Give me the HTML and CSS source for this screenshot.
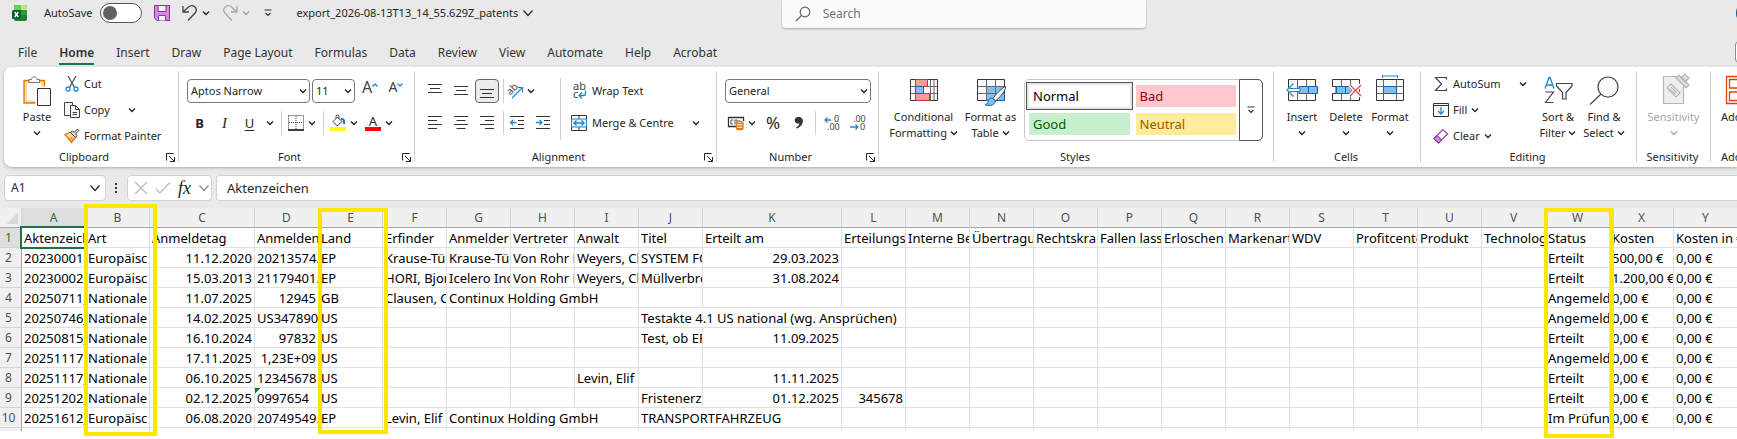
FILE: index.html
```html
<!DOCTYPE html>
<html lang="en">
<head>
  <meta charset="UTF-8" />
  <meta name="viewport" content="width=device-width, initial-scale=1.0"/>
  <title>export_2026-08-13T13_14_55.629Z_patents</title>
  <link rel="stylesheet" href="styles.css">
</head>
<body>

<svg class="defs" aria-hidden="true">
  <symbol id="chev" viewBox="0 0 8 8"><path d="M1 2.5 4 5.5 7 2.5" fill="none" stroke="currentColor" stroke-width="1.4"/></symbol>
  <symbol id="chev-lg" viewBox="0 0 12 12"><path d="M1.5 3.5 6 8.5 10.5 3.5" fill="none" stroke="currentColor" stroke-width="1.2"/></symbol>
  <symbol id="launch" viewBox="0 0 9 9"><path d="M.5 7.500V.5H7.500M3 3 8 8M8.500 4V8.500H4" fill="none" stroke="currentColor"/></symbol>
</svg>

<header class="titlebar">
  <div class="title-left">
    <svg class="logo" width="16" height="18" viewBox="0 0 16 18">
      <rect x="2" y="1" width="13" height="16" rx="2" fill="#1a7f37"/>
      <path d="M2 6V3a2 2 0 0 1 2-2h5v5z" fill="#5fd35a"/>
      <path d="M9 1h4a2 2 0 0 1 2 2v3H9z" fill="#b5ec6a"/>
      <rect x="9" y="6" width="6" height="5" fill="#2c9b3c"/>
      <rect y="6" width="9" height="9" rx="1.500" fill="#0c5c30"/>
      <path d="M2.700 8 6.300 13M6.300 8 2.700 13" stroke="#fff" stroke-width="1.400"/>
    </svg>
    <label class="autosave">AutoSave <input type="checkbox"></label>
    <button class="save" aria-label="Save">
      <svg width="16" height="16" viewBox="0 0 16 16" fill="#d58be0" stroke="#8b2fa0"><path d="M.5.5H15.500V15.500H3L.5 13z"/><path d="M4 .5H12V6.500H4zM4.500 15.500V10.500H11.500V15.500" fill="#f8f0fa"/></svg>
    </button>
    <button class="undo" aria-label="Undo">
      <svg width="16" height="18" viewBox="0 0 16 18" fill="none" stroke="#444" stroke-width="1.300"><path d="M1 2V8H7M1 8 6.500 3C11-.5 16 4 13.500 8.500L6 16.500"/></svg>
      <svg class="chev"><use href="#chev"/></svg>
    </button>
    <button class="redo" aria-label="Redo">
      <svg width="16" height="18" viewBox="0 0 16 18" fill="none" stroke="#a8a8a8" stroke-width="1.300"><path d="M15 2V8H9M15 8 9.500 3C5-.5 0 4 2.500 8.500L10 16.500"/></svg>
      <svg class="chev"><use href="#chev"/></svg>
    </button>
    <button class="customize" aria-label="Customise toolbar">
      <svg width="8" height="8" viewBox="0 0 8 8" fill="none" stroke="#333" stroke-width="1.200"><path d="M.5 1H7.500M1.500 4 4 6.500 6.500 4"/></svg>
    </button>
    <button class="filename">export_2026-08-13T13_14_55.629Z_patents <svg class="chev-lg"><use href="#chev-lg"/></svg></button>
  </div>
  <label class="search">
    <svg width="16" height="16" viewBox="0 0 16 16" fill="none" stroke="#666" stroke-width="1.200"><circle cx="10" cy="6" r="4.800"/><path d="M6.500 9.500 1 15"/></svg>
    <input type="text" placeholder="Search" aria-label="Search">
  </label>
  <button class="avatar" aria-label="Account"></button>
</header>

<nav class="tabs">
  <a href="#">File</a>
  <a href="#" class="active">Home</a>
  <a href="#">Insert</a>
  <a href="#">Draw</a>
  <a href="#">Page Layout</a>
  <a href="#">Formulas</a>
  <a href="#">Data</a>
  <a href="#">Review</a>
  <a href="#">View</a>
  <a href="#">Automate</a>
  <a href="#">Help</a>
  <a href="#">Acrobat</a>
  <button class="comments" aria-label="Comments"></button>
</nav>

<section class="ribbon">
  <div class="group clipboard">
    <div class="group-body">
      <button class="big">
        <svg width="32" height="32" viewBox="0 0 32 32">
          <path d="M3 5.500H23.500V28H3z" fill="#fbd992" stroke="#dd7a14" stroke-width="1.300"/>
          <path d="M6 8H20.500V25.500H6z" fill="#fafafa"/>
          <path d="M8 7.500V4.500H10.500C11 .8 15.500.8 16 4.500H18.500V7.500z" fill="#fff" stroke="#777"/>
          <path d="M14.500 11.500H29.500V31H14.500z" fill="#fff"/>
          <path d="M16.500 13.500H29.500V30.500H16.500z" fill="#fafafa" stroke="#333"/>
        </svg>
        <span>Paste</span>
        <svg class="chev"><use href="#chev"/></svg>
      </button>
      <div class="list">
        <button class="small">
          <svg width="16" height="16" viewBox="0 0 16 16" fill="none"><path d="M4 0 10.500 11.500M12 0 5.500 11.500" stroke="#555" stroke-width="1.300"/><circle cx="4" cy="13" r="2" stroke="#2088d0" stroke-width="1.300"/><circle cx="12" cy="13" r="2" stroke="#2088d0" stroke-width="1.300"/></svg>
          Cut
        </button>
        <button class="small">
          <svg width="16" height="16" viewBox="0 0 16 16" fill="#fafafa" stroke="#444"><path d="M.5.5H8.500V13.500H.5z"/><path d="M6.500 3.500H11.500L15.500 7.500V15.500H6.500z"/><path d="M11.500 3.500V7.500H15.500M8.500 10.500H13M8.500 12.500H13" fill="none"/></svg>
          Copy <svg class="chev far"><use href="#chev"/></svg>
        </button>
        <button class="small">
          <svg width="16" height="16" viewBox="0 0 16 16"><path d="M1 6.500 7 4 12 9 7.500 14.500z" fill="#fbd992" stroke="#e07a14" stroke-width="1.300"/><path d="M4 11 8.500 9.500M6 13 9 11" stroke="#e07a14"/><path d="M6.500 4.500 8.500 3 10 4.500 13.500 1 15 2.500 11.500 6 13 7.500 11.500 9.500z" fill="#ddd" stroke="#444"/></svg>
          Format Painter
        </button>
      </div>
    </div>
    <div class="group-label"><span>Clipboard</span><button aria-label="Clipboard settings"><svg class="launch"><use href="#launch"/></svg></button></div>
  </div>

  <div class="group font">
    <div class="group-body rows">
      <div class="row">
        <div class="combo face"><select aria-label="Font"><option>Aptos Narrow</option></select><svg class="chev"><use href="#chev"/></svg></div>
        <div class="combo size"><select aria-label="Font size"><option>11</option></select><svg class="chev"><use href="#chev"/></svg></div>
        <button class="tool grow" aria-label="Increase font size">A<svg width="6" height="4" viewBox="0 0 6 4"><path d="M.5 3.500 3 1 5.500 3.500" fill="none" stroke="#2088d0" stroke-width="1.300"/></svg></button>
        <button class="tool shrink" aria-label="Decrease font size">A<svg width="6" height="4" viewBox="0 0 6 4"><path d="M.5.5 3 3 5.500.5" fill="none" stroke="#2088d0" stroke-width="1.300"/></svg></button>
      </div>
      <div class="row">
        <button class="letter bold">B</button>
        <button class="letter italic">I</button>
        <button class="letter underline">U</button>
        <button class="drop" aria-label="Underline options"><svg class="chev"><use href="#chev"/></svg></button>
        <i class="sep"></i>
        <button class="split"><svg width="16" height="16" viewBox="0 0 16 16" fill="none" stroke="#333"><path d="M.5.5H15.500V14M.5.5V14M8 1V14M1 7.500H15" stroke-dasharray="1 1"/><path d="M0 15H16" stroke="#000" stroke-width="1.500"/></svg><svg class="chev"><use href="#chev"/></svg></button>
        <i class="sep"></i>
        <button class="split"><svg width="16" height="16" viewBox="0 0 16 16"><path d="M3 6.500 7.500 2 12 6.500 7 11z" fill="#fafafa" stroke="#444"/><path d="M6 3.500V1.500A1.500 1.500 0 0 1 9 1.500V4" fill="none" stroke="#444"/><path d="M11 4C14 3.500 14.500 6 14 9" fill="none" stroke="#1a6fb5" stroke-width="2"/><path d="M0 12H16V16H0z" fill="#ff0"/></svg><svg class="chev"><use href="#chev"/></svg></button>
        <button class="split fontcolor"><b>A</b><svg class="chev"><use href="#chev"/></svg></button>
      </div>
    </div>
    <div class="group-label"><span>Font</span><button aria-label="Font settings"><svg class="launch"><use href="#launch"/></svg></button></div>
  </div>

  <div class="group align">
    <div class="group-body">
      <div class="rows">
        <div class="row">
          <button class="tool" aria-label="Top align"><svg width="14" height="14" viewBox="0 0 14 14" stroke="#333"><path d="M0 .5H14M2 4.500H12M0 8.500H14"/></svg></button>
          <button class="tool" aria-label="Middle align"><svg width="14" height="14" viewBox="0 0 14 14" stroke="#333"><path d="M0 2.500H14M2 6.500H12M0 10.500H14"/></svg></button>
          <button class="tool on" aria-label="Bottom align"><svg width="14" height="14" viewBox="0 0 14 14" stroke="#333"><path d="M0 5.500H14M2 9.500H12M0 13.500H14"/></svg></button>
          <i class="sep"></i>
          <button class="split"><svg width="16" height="16" viewBox="0 0 16 16"><text x="1" y="11" font-size="10" fill="#444" transform="rotate(-45 4 9)">ab</text><path d="M5 15 15 5M10.500 4.500H15.500V9.500" fill="none" stroke="#2088d0" stroke-width="1.200"/></svg><svg class="chev"><use href="#chev"/></svg></button>
        </div>
        <div class="row">
          <button class="tool" aria-label="Align left"><svg width="14" height="14" viewBox="0 0 14 14" stroke="#333"><path d="M0 .5H14M0 4.500H9M0 8.500H14M0 12.500H9"/></svg></button>
          <button class="tool" aria-label="Centre"><svg width="14" height="14" viewBox="0 0 14 14" stroke="#333"><path d="M0 .5H14M2.500 4.500H11.500M0 8.500H14M2.500 12.500H11.500"/></svg></button>
          <button class="tool" aria-label="Align right"><svg width="14" height="14" viewBox="0 0 14 14" stroke="#333"><path d="M0 .5H14M5 4.500H14M0 8.500H14M5 12.500H14"/></svg></button>
          <i class="sep"></i>
          <button class="tool" aria-label="Decrease indent"><svg width="14" height="14" viewBox="0 0 14 14" fill="none" stroke="#333"><path d="M0 .5H14M8 4.500H14M8 8.500H14M0 12.500H14"/><path d="M6.500 6.500H.5M3 4 .5 6.500 3 9" stroke="#2088d0" stroke-width="1.300"/></svg></button>
          <button class="tool" aria-label="Increase indent"><svg width="14" height="14" viewBox="0 0 14 14" fill="none" stroke="#333"><path d="M0 .5H14M8 4.500H14M8 8.500H14M0 12.500H14"/><path d="M0 6.500H6M3.500 4 6 6.500 3.500 9" stroke="#2088d0" stroke-width="1.300"/></svg></button>
        </div>
      </div>
      <i class="sep tall"></i>
      <div class="rows wrap">
        <button class="small">
          <svg width="16" height="16" viewBox="0 0 16 16"><text x="2" y="7" font-size="11" fill="#444">ab</text><text x="2" y="15" font-size="11" fill="#444">c</text><path d="M14.500 7.500V10.500A2 2 0 0 1 12.500 12.500H8.500M11 9.500 8 12.500 11 15.500" fill="none" stroke="#2088d0" stroke-width="1.300"/></svg>
          Wrap Text
        </button>
        <button class="small">
          <svg width="16" height="16" viewBox="0 0 16 16" fill="none"><path d="M.5.5H15.500V15.500H.5zM8 .5V4M8 12V15.500" stroke="#333"/><path d="M.5 4H15.500V12H.5z" fill="#e3f1fb" stroke="#2088d0"/><path d="M3 8H13M5.500 5.500 3 8 5.500 10.500M10.500 5.500 13 8 10.500 10.500" stroke="#2088d0" stroke-width="1.300"/></svg>
          Merge &amp; Centre <svg class="chev far"><use href="#chev"/></svg>
        </button>
      </div>
    </div>
    <div class="group-label"><span>Alignment</span><button aria-label="Alignment settings"><svg class="launch"><use href="#launch"/></svg></button></div>
  </div>

  <div class="group number">
    <div class="group-body rows">
      <div class="row">
        <div class="combo format"><select aria-label="Number format"><option>General</option></select><svg class="chev"><use href="#chev"/></svg></div>
      </div>
      <div class="row">
        <button class="split"><svg width="16" height="16" viewBox="0 0 16 16" fill="none"><path d="M8 11.500H.5V2.500H15.500V6" stroke="#333" stroke-width="1.300"/><path d="M5.500 5H3V9H5M7 9.500V5H9V7M11 5V6" stroke="#555"/><path d="M8.500 7.500C8.500 6 15 6 15 7.500V13.500C15 15 8.500 15 8.500 13.500z" fill="#fff" stroke="#e07a14" stroke-width="1.300"/><path d="M8.500 8.500H15M8.500 11H15M8.500 13.500H15" stroke="#e07a14" stroke-width="1.300"/></svg><svg class="chev"><use href="#chev"/></svg></button>
        <button class="tool percent">%</button>
        <button class="tool" aria-label="Comma style"><svg width="10" height="14" viewBox="0 0 10 14"><path d="M4.500 1A3.300 3.300 0 1 0 5.500 7.200C5 9 4 10.500 2 11.500L2.500 12.500C11 9.500 10.500 1 4.500 1z" fill="#333"/></svg></button>
        <i class="sep"></i>
        <button class="tool" aria-label="Increase decimal"><svg width="16" height="16" viewBox="0 0 16 16"><text x="10" y="7" font-size="9" fill="#444">0</text><text x="3" y="15" font-size="9" fill="#444">.00</text><path d="M7 5H1M3.500 2.500 1 5 3.500 7.500" fill="none" stroke="#2088d0" stroke-width="1.300"/></svg></button>
        <button class="tool" aria-label="Decrease decimal"><svg width="16" height="16" viewBox="0 0 16 16"><text x="3" y="7" font-size="9" fill="#444">.00</text><text x="10" y="15" font-size="9" fill="#444">0</text><path d="M0 12H8M5.500 9.500 8 12 5.500 14.500" fill="none" stroke="#2088d0" stroke-width="1.300"/></svg></button>
      </div>
    </div>
    <div class="group-label"><span>Number</span><button aria-label="Number settings"><svg class="launch"><use href="#launch"/></svg></button></div>
  </div>

  <div class="group styles">
    <div class="group-body">
      <button class="big">
        <svg width="32" height="32" viewBox="0 0 32 32" fill="#fafafa" stroke="#666">
          <path d="M2.500 4.500H29.500V25.500H2.500z" stroke="#333"/>
          <path d="M7.500 4.500V25.500M22.500 4.500V25.500M2.500 11.500H29.500M2.500 18.500H29.500M26 4.500V25.500"/>
          <path d="M7.500 4.500H19.500V11.500H7.500zM7.500 18.500H21.500V25.500H7.500z" fill="#ff9a9a" stroke="#d83030"/>
          <path d="M7.500 11.500H15.500V18.500H7.500z" fill="#83beec" stroke="#0f63b0"/>
        </svg>
        <span>Conditional</span><span>Formatting <svg class="chev"><use href="#chev"/></svg></span>
      </button>
      <button class="big">
        <svg width="32" height="32" viewBox="0 0 32 32" fill="#fafafa" stroke="#666">
          <path d="M2.500 4.500H29.500V25.500H2.500z" stroke="#333"/>
          <path d="M11.500 11.500H29.500V25.500H11.500z" fill="#83beec" stroke="#0f63b0"/>
          <path d="M11.500 4.500V25.500M20.500 4.500V25.500M2.500 11.500H29.500M2.500 18.500H29.500" fill="none"/>
          <path d="M30.500 11.500C28 12 20 20 18 23.500L20.500 26C24 23 31 16 30.500 11.500z" fill="#fff" stroke="#444"/>
          <path d="M18 23.500C14.500 22.500 13 25 13 27 12.500 29 11 29.500 10 29.500 13 31.500 20 30.500 20.500 26z" fill="#83beec" stroke="#0f63b0"/>
        </svg>
        <span>Format as</span><span>Table <svg class="chev"><use href="#chev"/></svg></span>
      </button>
      <div class="gallery">
        <div class="swatches">
          <button class="swatch normal">Normal</button>
          <button class="swatch bad">Bad</button>
          <button class="swatch good">Good</button>
          <button class="swatch neutral">Neutral</button>
        </div>
        <button class="more" aria-label="More styles"><svg width="8" height="8" viewBox="0 0 8 8" fill="none" stroke="#333" stroke-width="1.200"><path d="M.5 1H7.500M1.500 4 4 6.500 6.500 4"/></svg></button>
      </div>
    </div>
    <div class="group-label"><span>Styles</span></div>
  </div>

  <div class="group cells">
    <div class="group-body">
      <button class="big">
        <svg width="32" height="32" viewBox="0 0 32 32" fill="#fafafa" stroke="#666">
          <path d="M2.500 4.500H29.500V25.500H2.500z" stroke="#333"/>
          <path d="M11.500 4.500V25.500M20.500 4.500V25.500" fill="none"/>
          <path d="M13 11.500H31.500V18.500H13z" fill="#83beec" stroke="#0f63b0"/><path d="M22.500 11.500V18.500" stroke="#0f63b0"/>
          <path d="M7 8.500 0 15 7 21.500 8.500 20 5 16.500H14V13.500H5L8.500 10z" fill="#fff" stroke="none"/>
          <path d="M14 13.500H3.500M14 16.500H3.500M7.500 8.500 1 15 7.500 21.500M14 13.500V16.500" fill="none" stroke="#2088d0" stroke-width="1.200"/>
        </svg>
        <span>Insert</span><svg class="chev"><use href="#chev"/></svg>
      </button>
      <button class="big">
        <svg width="32" height="32" viewBox="0 0 32 32" fill="#fafafa" stroke="#666">
          <path d="M2.500 4.500H29.500V25.500H2.500V18.500H6V11.500H2.500z" stroke="#333"/>
          <path d="M11.500 4.500V11M20.500 4.500V11M11.500 19V25.500M20.500 19V25.500"/>
          <path d="M6.500 11.500H19L22.500 15 19 18.500H6.500z" fill="#83beec" stroke="#0f63b0"/><path d="M15.500 11.500V18.500" stroke="#0f63b0"/>
          <path d="M20 10 31 21M31 10 20 21" stroke="#fff" stroke-width="4"/>
          <path d="M20 10 31 21M31 10 20 21" stroke="#f04848" stroke-width="1.300"/>
        </svg>
        <span>Delete</span><svg class="chev"><use href="#chev"/></svg>
      </button>
      <button class="big">
        <svg width="32" height="32" viewBox="0 0 32 32" fill="#fafafa" stroke="#666">
          <path d="M2.500 4.500H29.500V25.500H2.500z" stroke="#333"/>
          <path d="M9.500 4.500V25.500M22.500 4.500V25.500M2.500 11.500H29.500M2.500 18.500H29.500"/>
          <path d="M9.500 11.500H22.500V18.500H9.500z" fill="#83beec" stroke="#0f63b0"/>
          <path d="M8.500 0V3M23.500 0V3M8.500 1H23.500" stroke="#2088d0"/>
        </svg>
        <span>Format</span><svg class="chev"><use href="#chev"/></svg>
      </button>
    </div>
    <div class="group-label"><span>Cells</span></div>
  </div>

  <div class="group editing">
    <div class="group-body">
      <div class="list">
        <button class="small">
          <svg width="16" height="16" viewBox="0 0 16 16" fill="none" stroke="#444" stroke-width="1.200"><path d="M13.500 3.500V1.500H2.500L8.500 8 2.500 14.500H13.500V12.500"/></svg>
          AutoSum <svg class="chev far"><use href="#chev"/></svg>
        </button>
        <button class="small">
          <svg width="16" height="16" viewBox="0 0 16 16" fill="#fafafa" stroke="#333"><path d="M.5 1.500H15.500V14.500H.5zM.5 3.500H15.500"/><path d="M8 5V12M5 9 8 12 11 9" fill="none" stroke="#2088d0" stroke-width="1.300"/></svg>
          Fill <svg class="chev"><use href="#chev"/></svg>
        </button>
        <button class="small">
          <svg width="16" height="16" viewBox="0 0 16 16" fill="#fff" stroke="#9a3fae" stroke-width="1.200"><path d="M1 10.500 10 1.500 14.500 6 5.500 15z"/><path d="M1 10.500 4 7.500 8.500 12 5.500 15z" fill="#d58be0"/></svg>
          Clear <svg class="chev"><use href="#chev"/></svg>
        </button>
      </div>
      <button class="big">
        <svg width="32" height="32" viewBox="0 0 32 32" fill="none"><path d="M3 13.500 7 2.500H8L12 13.500M4.500 10H10.500" stroke="#2088d0" stroke-width="1.300"/><path d="M3.500 17H11.500L3.500 27.500H11.500" stroke="#444" stroke-width="1.200"/><path d="M14.500 8.500H30V11L24 17.500V24H20.500V17.500L14.500 11z" fill="#fafafa" stroke="#444" stroke-width="1.200"/></svg>
        <span>Sort &amp;</span><span>Filter <svg class="chev"><use href="#chev"/></svg></span>
      </button>
      <button class="big">
        <svg width="32" height="32" viewBox="0 0 32 32" fill="#fafafa" stroke="#444" stroke-width="1.200"><circle cx="20" cy="12" r="10"/><path d="M13 19 2 29.500"/></svg>
        <span>Find &amp;</span><span>Select <svg class="chev"><use href="#chev"/></svg></span>
      </button>
    </div>
    <div class="group-label"><span>Editing</span></div>
  </div>

  <div class="group sensitivity">
    <div class="group-body">
      <button class="big" disabled>
        <svg width="32" height="32" viewBox="0 0 32 32" fill="#eee" stroke="#b5b5b5" stroke-width="1.200"><path d="M5.500 1.500H25.500V28.500H5.500z"/><path d="M13 9 22 18 18 22 9 13z" fill="#f8f8f8"/><path d="M13 12 19 18M11.500 13.500 17.500 19.500"/><path d="M18 3 21 0 31 10 28 13zM23 3 27-1 31 3 27 7z" fill="#ddd"/></svg>
        <span>Sensitivity</span><svg class="chev"><use href="#chev"/></svg>
      </button>
    </div>
    <div class="group-label"><span>Sensitivity</span></div>
  </div>

  <div class="group addins">
    <div class="group-body">
      <button class="big">
        <svg width="32" height="32" viewBox="0 0 32 32" fill="#fff" stroke="#d8430a" stroke-width="1.300"><path d="M1.500 1.500H29.500V28.500H1.500z"/><path d="M4.500 4.500H13V13H4.500zM4.500 17H13V25.500H4.500zM17 4.500H25V13H17zM17 17H25V25.500H17z"/></svg>
        <span>Add-ins</span>
      </button>
    </div>
    <div class="group-label"><span>Add-ins</span></div>
  </div>
</section>

<section class="formula-bar">
  <label class="name-box"><input type="text" value="A1" aria-label="Name box"><svg class="chev-lg"><use href="#chev-lg"/></svg></label>
  <svg class="dots" width="4" height="12" viewBox="0 0 4 12" fill="#333"><path d="M1 1h2v2H1zM1 5h2v2H1zM1 9h2v2H1z"/></svg>
  <div class="fx">
    <svg width="14" height="14" viewBox="0 0 14 14" stroke="#b8b8b8" stroke-width="1.200"><path d="M1 1 13 13M13 1 1 13"/></svg>
    <svg width="16" height="14" viewBox="0 0 16 14" fill="none" stroke="#b8b8b8" stroke-width="1.200"><path d="M1 8 5 12 15 1.500"/></svg>
    <em>fx</em>
    <svg class="chev-lg"><use href="#chev-lg"/></svg>
  </div>
  <input class="formula" type="text" value="Aktenzeichen" aria-label="Formula">
</section>

<main class="sheet">
  <table id="grid"></table>
  <div class="mark mark-b"></div>
  <div class="mark mark-e"></div>
  <div class="mark mark-w"></div>
</main>

<script>
const table = document.getElementById('grid');
const letters = 'ABCDEFGHIJKLMNOPQRSTUVWXY'.split('');
const wide = { C: 'col-c', K: 'col-k' };

// "n" = right aligned, "span" = text runs over the empty cells next to it
const rows = [
  { A: 'Aktenzeichen', B: 'Art', C: 'Anmeldetag', D: 'Anmeldenummer', E: 'Land', F: 'Erfinder', G: 'Anmelder', H: 'Vertreter', I: 'Anwalt', J: 'Titel', K: 'Erteilt am', L: 'Erteilungs', M: 'Interne Be', N: 'Übertragu', O: 'Rechtskra', P: 'Fallen lass', Q: 'Erloschen', R: 'Markenart', S: 'WDV', T: 'Profitcente', U: 'Produkt', V: 'Technolog', W: 'Status', X: 'Kosten', Y: 'Kosten in €' },
  { A: '20230001E', B: 'Europäisc', C: { n: '11.12.2020' }, D: '20213574.5', E: 'EP', F: 'Krause-Tü', G: 'Krause-Tü', H: 'Von Rohr P', I: 'Weyers, Ch', J: 'SYSTEM FO', K: { n: '29.03.2023' }, W: 'Erteilt', X: '500,00 €', Y: '0,00 €' },
  { A: '20230002E', B: 'Europäisc', C: { n: '15.03.2013' }, D: '21179401.1', E: 'EP', F: 'HORI, Bjor', G: 'Icelero Inc', H: 'Von Rohr P', I: 'Weyers, Ch', J: 'Müllverbre', K: { n: '31.08.2024' }, W: 'Erteilt', X: '1.200,00 €', Y: '0,00 €' },
  { A: '20250711_', B: 'Nationale', C: { n: '11.07.2025' }, D: { n: '12945' }, E: 'GB', F: 'Clausen, C', G: { t: 'Continux Holding GmbH', span: 3 }, W: 'Angemeld', X: '0,00 €', Y: '0,00 €' },
  { A: '20250746_', B: 'Nationale', C: { n: '14.02.2025' }, D: 'US3478909', E: 'US', J: { t: 'Testakte 4.1 US national (wg. Ansprüchen)', span: 3 }, W: 'Angemeld', X: '0,00 €', Y: '0,00 €' },
  { A: '20250815_', B: 'Nationale', C: { n: '16.10.2024' }, D: { n: '97832' }, E: 'US', J: 'Test, ob EP', K: { n: '11.09.2025' }, W: 'Erteilt', X: '0,00 €', Y: '0,00 €' },
  { A: { n: '20251117' }, B: 'Nationale', C: { n: '17.11.2025' }, D: { n: '1,23E+09' }, E: 'US', W: 'Angemeld', X: '0,00 €', Y: '0,00 €' },
  { A: '20251117_', B: 'Nationale', C: { n: '06.10.2025' }, D: { n: '12345678' }, E: 'US', I: 'Levin, Elif', K: { n: '11.11.2025' }, W: 'Erteilt', X: '0,00 €', Y: '0,00 €' },
  { A: '20251202_', B: 'Nationale', C: { n: '02.12.2025' }, D: { t: '0997654', flag: true }, E: 'US', J: 'Fristenerze', K: { n: '01.12.2025' }, L: { n: '345678' }, W: 'Erteilt', X: '0,00 €', Y: '0,00 €' },
  { A: '20251612_', B: 'Europäisc', C: { n: '06.08.2020' }, D: '20749549.6', E: 'EP', F: 'Levin, Elif', G: { t: 'Continux Holding GmbH', span: 3 }, J: { t: 'TRANSPORTFAHRZEUG', span: 2 }, W: 'Im Prüfung', X: '0,00 €', Y: '0,00 €' }
];

let html = '<colgroup><col class="col-head">' +
  letters.map(l => `<col class="${wide[l] || 'col'}">`).join('') + '</colgroup>';

html += '<thead><tr><th class="corner"></th>' +
  letters.map(l => `<th class="${l === 'A' ? 'current' : ''}">${l}</th>`).join('') + '</tr></thead><tbody>';

rows.forEach((row, r) => {
  html += `<tr><th class="${r === 0 ? 'current' : ''}">${r + 1}</th>`;
  for (let c = 0; c < letters.length; c++) {
    const cell = row[letters[c]] || '';
    const text = cell.n || cell.t || (typeof cell === 'string' ? cell : '');
    const cls = [cell.n && 'num', cell.flag && 'flag', r === 0 && c === 0 && 'selected'].filter(Boolean).join(' ');
    const span = cell.span || 1;
    html += `<td class="${cls}" colspan="${span}"><div>${text}</div></td>`;
    c += span - 1;
  }
  html += '</tr>';
});

// sliver of the next row
html += '<tr class="cut"><th></th>' + '<td></td>'.repeat(letters.length) + '</tr></tbody>';
table.innerHTML = html;
</script>

</body>
</html>
```
FILE: styles.css
```css
* {
  box-sizing: border-box;
}
body {
  margin: 0;
  font-family: 'Noto Sans', 'Open Sans', sans-serif;
  font-size: 11px;
  line-height: 16px;
  background: #e9e9e9;
  color: #262626;
  overflow: hidden;
}
button, input, select {
  font: inherit;
  color: inherit;
  background: none;
  border: 0;
  padding: 0;
  margin: 0;
  outline: 0;
}
button {
  white-space: nowrap;
}
svg {
  flex: none;
  overflow: visible;
}
.defs {
  position: absolute;
  width: 0;
  height: 0;
}
.chev {
  width: 8px;
  height: 8px;
}
.chev-lg {
  width: 12px;
  height: 12px;
}
.launch {
  width: 9px;
  height: 9px;
}

/* title bar */
.titlebar {
  display: flex;
  height: 37px;
  align-items: flex-start;
}
.title-left {
  flex: 0 0 45%;
  display: flex;
  align-items: center;
  height: 26px;
  padding-left: 12px;
}
.title-left button {
  display: flex;
  align-items: center;
  gap: 4px;
}
.autosave {
  display: flex;
  align-items: center;
  gap: 8px;
  margin-left: 16px;
}
.autosave input {
  appearance: none;
  width: 42px;
  height: 20px;
  margin: 0;
  padding: 2px;
  border: 1px solid #555;
  border-radius: 10px;
  background: #fff;
}
.autosave input::before {
  content: '';
  display: block;
  width: 14px;
  height: 14px;
  border-radius: 50%;
  background: #616161;
}
.save {
  margin-left: 12px;
}
.undo, .redo {
  margin-left: 12px;
}
.redo {
  color: #a0a0a0;
}
.customize {
  margin-left: 14px;
}
.filename {
  margin-left: 24px;
}
.search {
  flex: 0 0 21%;
  display: flex;
  align-items: center;
  gap: 12px;
  height: 28px;
  padding-left: 13px;
  background: #fafafa;
  border-radius: 0 0 4px 4px;
  box-shadow: 0 1px 2px #aaa;
  font-size: 12px;
}
.search input {
  flex: 1;
  min-width: 0;
}
.search input::placeholder {
  color: #707070;
}
.avatar {
  flex: none;
  width: 24px;
  height: 24px;
  margin: 1px -23px 0 auto;
  border-radius: 50%;
  background: #1b4f7a;
}

/* tabs */
.tabs {
  display: flex;
  gap: 22px;
  height: 30px;
  padding: 6px 0 2px 18px;
  font-size: 12px;
}
.tabs a {
  height: 22px;
  line-height: 20px;
  color: #333;
  text-decoration: none;
  white-space: nowrap;
}
.tabs .active {
  font-weight: 600;
  border-bottom: 2px solid #107c41;
}
.comments {
  flex: none;
  width: 30px;
  height: 22px;
  margin: -2px -28px 0 auto;
  border: 1px solid #8a8a8a;
  border-radius: 4px;
  background: #fff;
}

/* ribbon */
.ribbon {
  display: flex;
  height: 100px;
  margin-left: 4px;
  padding: 4px 0 2px;
  background: #fff;
  border-radius: 8px 0 0 8px;
  box-shadow: 0 1px 3px #aaa;
  overflow: hidden;
}
.group {
  flex: none;
  display: flex;
  flex-direction: column;
  border-right: 1px solid #d0d0d0;
  height: 91px;
}
.group-body {
  flex: none;
  display: flex;
  height: 78px;
}
.group-label {
  flex: none;
  display: flex;
  line-height: 16px;
  height: 16px;
  padding-right: 2px;
}
.group-label span {
  flex: 1;
  text-align: center;
}
.group-label button {
  display: flex;
  align-items: center;
  justify-content: center;
  width: 12px;
}
.big {
  display: flex;
  flex-direction: column;
  align-items: center;
  padding-top: 4px;
}
.big > svg:first-child {
  margin-bottom: 2px;
}
.big > .chev {
  margin-top: 4px;
}
.big:disabled {
  color: #a6a6a6;
}
.list {
  display: flex;
  flex-direction: column;
}
.small {
  display: flex;
  align-items: center;
  gap: 4px;
  height: 26px;
}
.small .far {
  margin-left: auto;
}
.rows {
  display: flex;
  flex-direction: column;
  padding-top: 4px;
}
.row {
  display: flex;
  align-items: center;
  height: 32px;
}
.sep {
  width: 1px;
  height: 24px;
  margin: 0 3px;
  background: #d0d0d0;
}
.tool {
  display: flex;
  align-items: center;
  justify-content: center;
  width: 24px;
  height: 24px;
  margin: 0 1px;
}
.tool.on {
  background: #ebebeb;
  border: 1px solid #666;
  border-radius: 4px;
}
.letter {
  width: 25px;
  height: 24px;
  font-size: 13px;
}
.bold {
  font-weight: 700;
}
.italic {
  font-family: 'Liberation Serif', serif;
  font-style: italic;
  font-size: 15px;
}
.underline {
  text-decoration: underline;
  text-underline-offset: 2px;
}
.drop {
  width: 16px;
  display: flex;
  justify-content: center;
}
.split {
  display: flex;
  align-items: center;
  gap: 4px;
  padding: 0 4px 0 3px;
}
.combo {
  position: relative;
  height: 24px;
  margin-right: 2px;
}
.combo select {
  appearance: none;
  width: 100%;
  height: 100%;
  padding-left: 3px;
  border: 1px solid #777;
  border-radius: 4px;
  background: #fff;
}
.combo .chev {
  position: absolute;
  right: 3px;
  top: 8px;
}

.clipboard {
  width: 175px;
}
.clipboard .big {
  width: 52px;
  margin: 0 1px 0 7px;
}
.clipboard .list {
  width: 98px;
}
.clipboard .far {
  margin-right: 26px;
}

.font {
  width: 236px;
}
.font .row, .number .row {
  padding-left: 8px;
}
.face {
  width: 123px;
}
.size {
  width: 43px;
}
.grow, .shrink {
  align-items: baseline;
  font-size: 16px;
  color: #444;
}
.shrink {
  font-size: 14px;
}
.grow svg, .shrink svg {
  align-self: flex-start;
  margin-top: 4px;
}
.fontcolor b {
  width: 16px;
  height: 16px;
  border-bottom: 4px solid #f00;
  font-size: 13px;
  line-height: 12px;
  font-weight: 400;
}

.align {
  width: 302px;
}
.align .row {
  padding-left: 7px;
}
.align .sep {
  margin: 0 0 0 3px;
}
.align .sep.tall {
  height: 62px;
  margin: 7px 10px 0 4px;
}
.wrap {
  flex: 1;
}
.wrap .small {
  height: 32px;
  gap: 5px;
}
.wrap .far {
  margin-right: 16px;
}

.number {
  width: 162px;
}
.format {
  width: 146px;
}
.percent {
  font-size: 17px;
}

.styles {
  width: 395px;
}
.styles .group-body {
  padding-left: 11px;
}
.styles .big {
  width: 67px;
}
.gallery {
  display: flex;
  width: 239px;
  height: 62px;
  margin-top: 8px;
  border: 1px solid #c8c8c8;
  border-radius: 5px;
}
.swatches {
  flex: 1;
  display: grid;
  grid-template-columns: 1fr 1fr;
  gap: 6px;
  padding: 5px 4px;
}
.swatch {
  padding-left: 4px;
  font-size: 13px;
  text-align: left;
}
.normal {
  color: #000;
  box-shadow: 0 0 0 2px #e4e4e4, 0 0 0 3px #555;
}
.bad {
  background: #ffc7ce;
  color: #9c0006;
}
.good {
  background: #c6efce;
  color: #006100;
}
.neutral {
  background: #ffeb9c;
  color: #9c5700;
}
.more {
  width: 24px;
  margin: -1px;
  border: 1px solid #555;
  border-radius: 0 5px 5px 0;
}

.cells {
  width: 147px;
}
.cells .group-body {
  padding-left: 6px;
}
.cells .big {
  width: 44px;
}

.editing {
  width: 216px;
}
.editing .group-body {
  padding-left: 12px;
}
.editing .list {
  width: 98px;
  margin-right: 4px;
}
.editing .far {
  margin-right: 4px;
}
.editing .big {
  width: 46px;
}

.sensitivity {
  width: 74px;
}
.sensitivity .big {
  flex: 1;
}
.addins {
  padding-left: 10px;
}

/* formula bar */
.formula-bar {
  display: flex;
  align-items: center;
  height: 41px;
  padding: 8px 0 7px 4px;
  font-size: 13px;
}
.name-box, .fx, .formula {
  height: 26px;
  background: #fff;
  border: 1px solid #d2d2d2;
  border-radius: 4px;
}
.name-box {
  display: flex;
  align-items: center;
  width: 102px;
  padding: 0 4px 0 6px;
}
.name-box input {
  flex: 1;
  min-width: 0;
  font-size: 12px;
}
.dots {
  margin: 0 9px 0 8px;
}
.fx {
  display: flex;
  align-items: center;
  justify-content: space-between;
  width: 85px;
  padding: 0 1px 0 6px;
  color: #888;
}
.fx em {
  font-family: 'Liberation Serif', serif;
  font-size: 18px;
  color: #222;
}
.formula {
  flex: 1;
  margin-left: 4px;
  padding-left: 10px;
  border-right: 0;
  border-radius: 4px 0 0 4px;
}

/* sheet */
.sheet {
  position: relative;
  min-height: 231px;
  background: #fff;
}
table {
  table-layout: fixed;
  width: 1738px;
  border-collapse: separate;
  border-spacing: 0;
  font-size: 13px;
  line-height: 21px;
  color: #000;
}
.col-head {
  width: 22px;
}
.col {
  width: 64px;
}
.col-c {
  width: 105px;
}
.col-k {
  width: 139px;
}
th {
  height: 20px;
  padding: 0;
  background: #f0f0f0;
  border-right: 1px solid #d4d4d4;
  color: #505050;
  font-size: 12px;
  font-weight: 400;
  line-height: 19px;
}
thead th {
  border-bottom: 1px solid #a6a6a6;
}
tbody th {
  padding-right: 4px;
  border-right-color: #a6a6a6;
  border-bottom: 1px solid #d4d4d4;
}
th.current {
  background: #dedede;
  color: #1e7145;
}
.corner {
  background: linear-gradient(to bottom right, #f0f0f0 50%, #d8d8d8 50%) 7px 5px / 11px 11px no-repeat #f0f0f0;
}
td {
  height: 20px;
  padding: 0 2px;
  border-right: 1px solid #e0e0e0;
  border-bottom: 1px solid #e0e0e0;
}
td div {
  height: 19px;
  overflow: hidden;
  white-space: nowrap;
  margin-right: -2px;
}
.num {
  text-align: right;
}
.num div {
  margin-right: 0;
}
.flag {
  background: linear-gradient(135deg, #0a7d1e 4px, transparent 4px);
}
.selected {
  position: relative;
}
.selected::after {
  content: '';
  position: absolute;
  inset: -2px -1px -2px -2px;
  border: 2px solid #1e7145;
}
.cut th, .cut td {
  height: 3px;
  border-bottom: 0;
}
.mark {
  position: absolute;
  border: 4px solid #ffe600;
}
.mark-b {
  left: 84px;
  top: -4px;
  width: 73px;
  height: 232px;
}
.mark-e {
  left: 318px;
  top: 0;
  width: 70px;
  height: 226px;
}
.mark-w {
  left: 1544px;
  top: 0;
  width: 70px;
  height: 230px;
}
```
